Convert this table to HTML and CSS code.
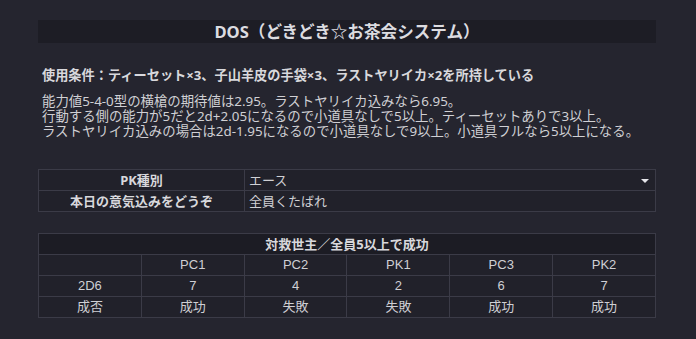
FILE: index.html
```html
<!DOCTYPE html>
<html lang="ja">
<head>
<meta charset="utf-8">
<link rel="stylesheet" href="styles.css">
</head>
<body>
<div class="page">
  <h1 class="title">DOS（どきどき☆お茶会システム）</h1>
  <p class="cond">使用条件：ティーセット×3、子山羊皮の手袋×3、ラストヤリイカ×2を所持している</p>
  <p class="desc">能力値5-4-0型の横槍の期待値は2.95。ラストヤリイカ込みなら6.95。<br>行動する側の能力が5だと2d+2.05になるので小道具なしで5以上。ティーセットありで3以上。<br>ラストヤリイカ込みの場合は2d-1.95になるので小道具なしで9以上。小道具フルなら5以上になる。</p>

  <table class="form">
    <tr>
      <th class="label">PK種別</th>
      <td class="value select">エース<span class="caret"></span></td>
    </tr>
    <tr>
      <th class="label">本日の意気込みをどうぞ</th>
      <td class="value">全員くたばれ</td>
    </tr>
  </table>

  <table class="result">
    <tr><th colspan="6" class="head">対救世主／全員5以上で成功</th></tr>
    <tr><td></td><td>PC1</td><td>PC2</td><td>PK1</td><td>PC3</td><td>PK2</td></tr>
    <tr><td>2D6</td><td>7</td><td>4</td><td>2</td><td>6</td><td>7</td></tr>
    <tr><td>成否</td><td>成功</td><td>失敗</td><td>失敗</td><td>成功</td><td>成功</td></tr>
  </table>
</div>
</body>
</html>
```

FILE: styles.css
```css
html, body {
  margin: 0;
  padding: 0;
  background: #25252f;
}
body {
  font-family: "Noto Sans", "Noto Sans CJK JP", sans-serif;
  color: #d4d4d8;
}
.page {
  width: 618px;
  margin-left: 38px;
  padding-top: 20px;
}
.title {
  margin: 0;
  height: 23px;
  line-height: 23px;
  background: #1d1d25;
  text-align: center;
  font-size: 16.6px;
  font-weight: bold;
  color: #dcdce0;
}
.cond {
  margin: 23px 0 0 4px;
  font-size: 13.2px;
  line-height: 18px;
  font-weight: bold;
  color: #d8d8dc;
  white-space: nowrap;
}
.desc {
  margin: 10px 0 0 4px;
  font-size: 13.4px;
  line-height: 15px;
  color: #d0d0d4;
  white-space: nowrap;
}
table {
  border-collapse: collapse;
  width: 618px;
  table-layout: fixed;
  background: #21212a;
  font-size: 13px;
}
th, td {
  border: 1px solid #3b3b47;
  height: 20px;
  padding: 0;
  line-height: 20px;
}
.form {
  margin-top: 30px;
}
.form .label {
  width: 205px;
  text-align: center;
  font-weight: bold;
  color: #d8d8dc;
}
.form .value {
  padding-left: 4px;
  color: #d0d0d4;
  position: relative;
}
.caret {
  position: absolute;
  right: 6px;
  top: 9px;
  width: 0;
  height: 0;
  border-left: 4px solid transparent;
  border-right: 4px solid transparent;
  border-top: 4px solid #e6e6ea;
}
.result {
  margin-top: 21px;
}
.result td {
  text-align: center;
  font-family: "Liberation Sans", "Noto Sans CJK JP", sans-serif;
  color: #cfcfd4;
}
.result .head {
  background: #1c1c24;
  text-align: center;
  font-weight: bold;
  color: #d8d8dc;
}
```
